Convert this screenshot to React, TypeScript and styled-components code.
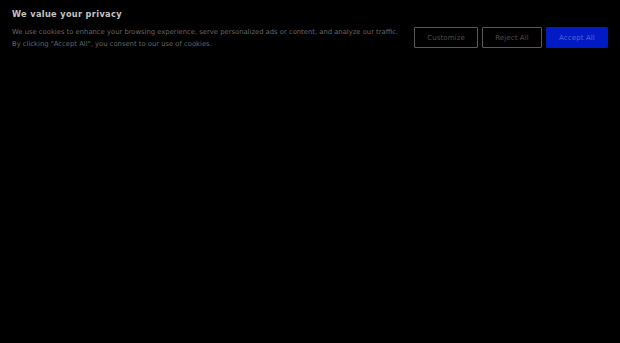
import React from 'react';
import styled, { createGlobalStyle, css } from 'styled-components';

const GlobalStyle = createGlobalStyle`
  html, body {
    margin: 0;
    padding: 0;
    background: #000;
  }
  body {
    font-family: 'DejaVu Sans', Verdana, sans-serif;
    width: 620px;
    height: 343px;
    overflow: hidden;
  }
`;

const Banner = styled.section`
  display: flex;
  align-items: flex-start;
  justify-content: space-between;
  padding: 8px 12px 0 12px;
`;

const TextBlock = styled.div`
  display: flex;
  flex-direction: column;
`;

const Title = styled.h2`
  margin: 0;
  font-size: 8.2px;
  font-weight: 700;
  letter-spacing: 0.35px;
  line-height: 12px;
  color: #c4c4c4;
`;

const Description = styled.p`
  margin: 6px 0 0;
  font-size: 6.8px;
  line-height: 12px;
  color: #666;
  white-space: nowrap;
`;

const Actions = styled.div`
  display: flex;
  gap: 4px;
  margin-top: 19px;
`;

const Button = styled.button<{ primary?: boolean; width: number }>`
  width: ${(p) => p.width}px;
  height: 21px;
  padding: 0;
  border-radius: 1px;
  font-family: inherit;
  font-size: 7px;
  letter-spacing: 0.1px;
  cursor: pointer;
  background: #000;
  border: 1px solid #585858;
  color: #4e4e4e;

  ${(p) =>
    p.primary &&
    css`
      background: #001ac4;
      border-color: #001ac4;
      color: #5666d2;
    `}
`;

export default function App() {
  return (
    <>
      <GlobalStyle />
      <Banner>
        <TextBlock>
          <Title>We value your privacy</Title>
          <Description>
            We use cookies to enhance your browsing experience, serve personalized ads or content, and analyze our traffic.
            <br />
            By clicking "Accept All", you consent to our use of cookies.
          </Description>
        </TextBlock>
        <Actions>
          <Button width={64}>Customize</Button>
          <Button width={60}>Reject All</Button>
          <Button width={62} primary>
            Accept All
          </Button>
        </Actions>
      </Banner>
    </>
  );
}
